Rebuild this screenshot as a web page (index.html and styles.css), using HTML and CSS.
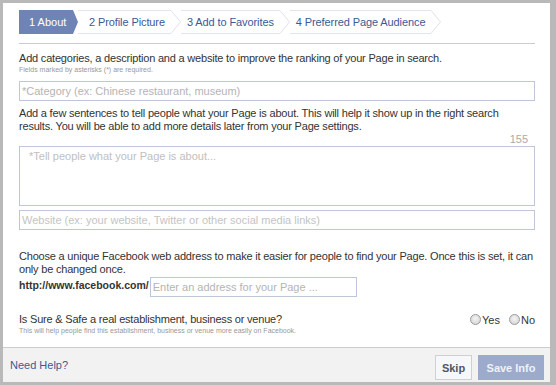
FILE: index.html
```html
<!DOCTYPE html>
<html>

<head>
  <title>Set up Page</title>
  <link rel="stylesheet" href="styles.css">
</head>

<body>
  <div class="dialog">
    <div class="content">
      <div class="steps">
        <span class="step step-current">1 About</span>
        <span class="step step-first">2 Profile Picture</span><svg class="chev" width="10" height="24"><polyline points="0,0.5 9.5,12 0,23.5" /></svg>
        <span class="step">3 Add to Favorites</span><svg class="chev" width="10" height="24"><polyline points="0,0.5 9.5,12 0,23.5" /></svg>
        <span class="step">4 Preferred Page Audience</span><svg class="chev" width="10" height="24"><polyline points="0,0.5 9.5,12 0,23.5" /></svg>
      </div>
      <hr class="rule">

      <p class="intro">Add categories, a description and a website to improve the ranking of your Page in search.</p>
      <p class="note">Fields marked by asterisks (*) are required.</p>
      <input class="field field-category" type="text" placeholder="*Category (ex: Chinese restaurant, museum)">

      <p class="help">Add a few sentences to tell people what your Page is about. This will help it show up in the right search results. You will be able to add more details later from your Page settings.</p>
      <div class="counter">155</div>
      <textarea class="field field-about" placeholder="*Tell people what your Page is about..."></textarea>
      <input class="field field-website" type="text" placeholder="Website (ex: your website, Twitter or other social media links)">

      <p class="choose">Choose a unique Facebook web address to make it easier for people to find your Page. Once this is set, it can only be changed once.</p>
      <div class="address">
        <span class="address-label">http://www.facebook.com/</span>
        <input class="field field-address" type="text" placeholder="Enter an address for your Page ...">
      </div>

      <div class="venue">
        <div>
          <p class="venue-question">Is Sure &amp; Safe a real establishment, business or venue?</p>
          <p class="note">This will help people find this establishment, business or venue more easily on Facebook.</p>
        </div>
        <div class="choices">
          <label class="choice"><span class="radio"></span>Yes</label>
          <label class="choice"><span class="radio"></span>No</label>
        </div>
      </div>
    </div>

    <div class="footer">
      <a class="need-help" href="#">Need Help?</a>
      <div class="buttons">
        <button class="btn btn-skip">Skip</button>
        <button class="btn btn-save">Save Info</button>
      </div>
    </div>
  </div>
</body>

</html>
```

FILE: styles.css
```css
body {
  margin: 0;
  background-color: #b9b9b9;
  font-family: "Liberation Sans", Arial, sans-serif;
  font-size: 11px;
  color: #333;
}

p {
  margin: 0;
}

.dialog {
  margin: 3px 0 0 3px;
  width: 547px;
  height: 379px;
  background-color: #fff;
  display: flex;
  flex-direction: column;
}

.content {
  flex: 1;
  padding: 7px 15px 0 16px;
}

/* steps */

.steps {
  display: flex;
  height: 24px;
}

.step {
  height: 22px;
  line-height: 22px;
  border-top: 1px solid #e1e5ee;
  border-bottom: 1px solid #e1e5ee;
  padding: 0 6px 0 6px;
  color: #3b5998;
  white-space: nowrap;
  letter-spacing: -0.1px;
}

.step-first {
  padding-left: 11px;
}

.step-current {
  width: 49px;
  height: 24px;
  line-height: 24px;
  border: 0;
  padding: 0 0 0 10px;
  background-color: #6d84b4;
  color: #fff;
  letter-spacing: 0;
  clip-path: polygon(0 0, 54px 0, 59px 12px, 54px 24px, 0 24px);
}

.chev {
  display: block;
  flex: none;
}

.chev polyline {
  fill: none;
  stroke: #dde2ec;
  stroke-width: 1;
}

.rule {
  border: 0;
  border-top: 1px solid #ccc;
  margin: 9px 0 0;
}

/* form */

.intro,
.help,
.choose,
.venue-question {
  letter-spacing: -0.2px;
}

.intro {
  margin-top: 8px;
  line-height: 13px;
}

.note {
  font-size: 7px;
  line-height: 10px;
  color: #999;
}

.field {
  display: block;
  box-sizing: border-box;
  width: 100%;
  height: 20px;
  margin: 0;
  padding: 0 2px;
  border: 1px solid #bdc7d8;
  border-radius: 0;
  font-family: inherit;
  font-size: 11px;
  color: #333;
  outline: none;
}

.field::placeholder {
  color: #b4b4b4;
}

.field-category {
  margin-top: 6px;
}

.help {
  margin-top: 6px;
  line-height: 13px;
}

.counter {
  line-height: 13px;
  text-align: right;
  padding-right: 7px;
  color: #aaa;
}

.field-about {
  height: 60px;
  padding: 3px 9px;
  line-height: 13px;
  resize: none;
}

.field-about::placeholder {
  color: #c0c0c0;
}

.field-website {
  margin-top: 4px;
}

.field-website::placeholder {
  color: #c4c4c4;
}

.choose {
  margin-top: 20px;
  line-height: 13px;
}

.address {
  display: flex;
  align-items: center;
  margin-top: 1px;
}

.address-label {
  font-size: 10.5px;
  font-weight: bold;
  line-height: 13px;
  padding-bottom: 3px;
}

.field-address {
  width: 207px;
  margin-left: 1px;
}

.venue {
  display: flex;
  justify-content: space-between;
  margin-top: 16px;
}

.venue-question {
  line-height: 13px;
}

.venue .note {
  line-height: 9px;
}

.choices {
  display: flex;
  gap: 9px;
  height: 13px;
  align-items: center;
}

.choice {
  display: flex;
  align-items: center;
  gap: 1px;
}

.radio {
  width: 9px;
  height: 9px;
  border: 1px solid #9a9a9a;
  border-radius: 50%;
  background: radial-gradient(circle at 50% 40%, #f4f4f4, #cfcfcf);
}

/* footer */

.footer {
  height: 35px;
  box-sizing: border-box;
  border-top: 1px solid #ccc;
  background-color: #f2f2f2;
  display: flex;
  justify-content: space-between;
  align-items: flex-start;
  padding: 7px 6px 0 7px;
}

.need-help {
  margin-top: 4px;
  line-height: 13px;
  color: #3b5998;
  text-decoration: none;
}

.buttons {
  display: flex;
  gap: 6px;
}

.btn {
  height: 25px;
  box-sizing: border-box;
  padding: 0;
  border: 1px solid;
  border-radius: 0;
  font-family: inherit;
  font-size: 11px;
  font-weight: bold;
  text-align: center;
}

.btn-skip {
  width: 37px;
  background-color: #f6f7f9;
  border-color: #ced0d4;
  color: #4e5665;
}

.btn-save {
  width: 66px;
  background-color: #9cabcc;
  border-color: #9cabcc;
  color: #eef1f7;
}
```
